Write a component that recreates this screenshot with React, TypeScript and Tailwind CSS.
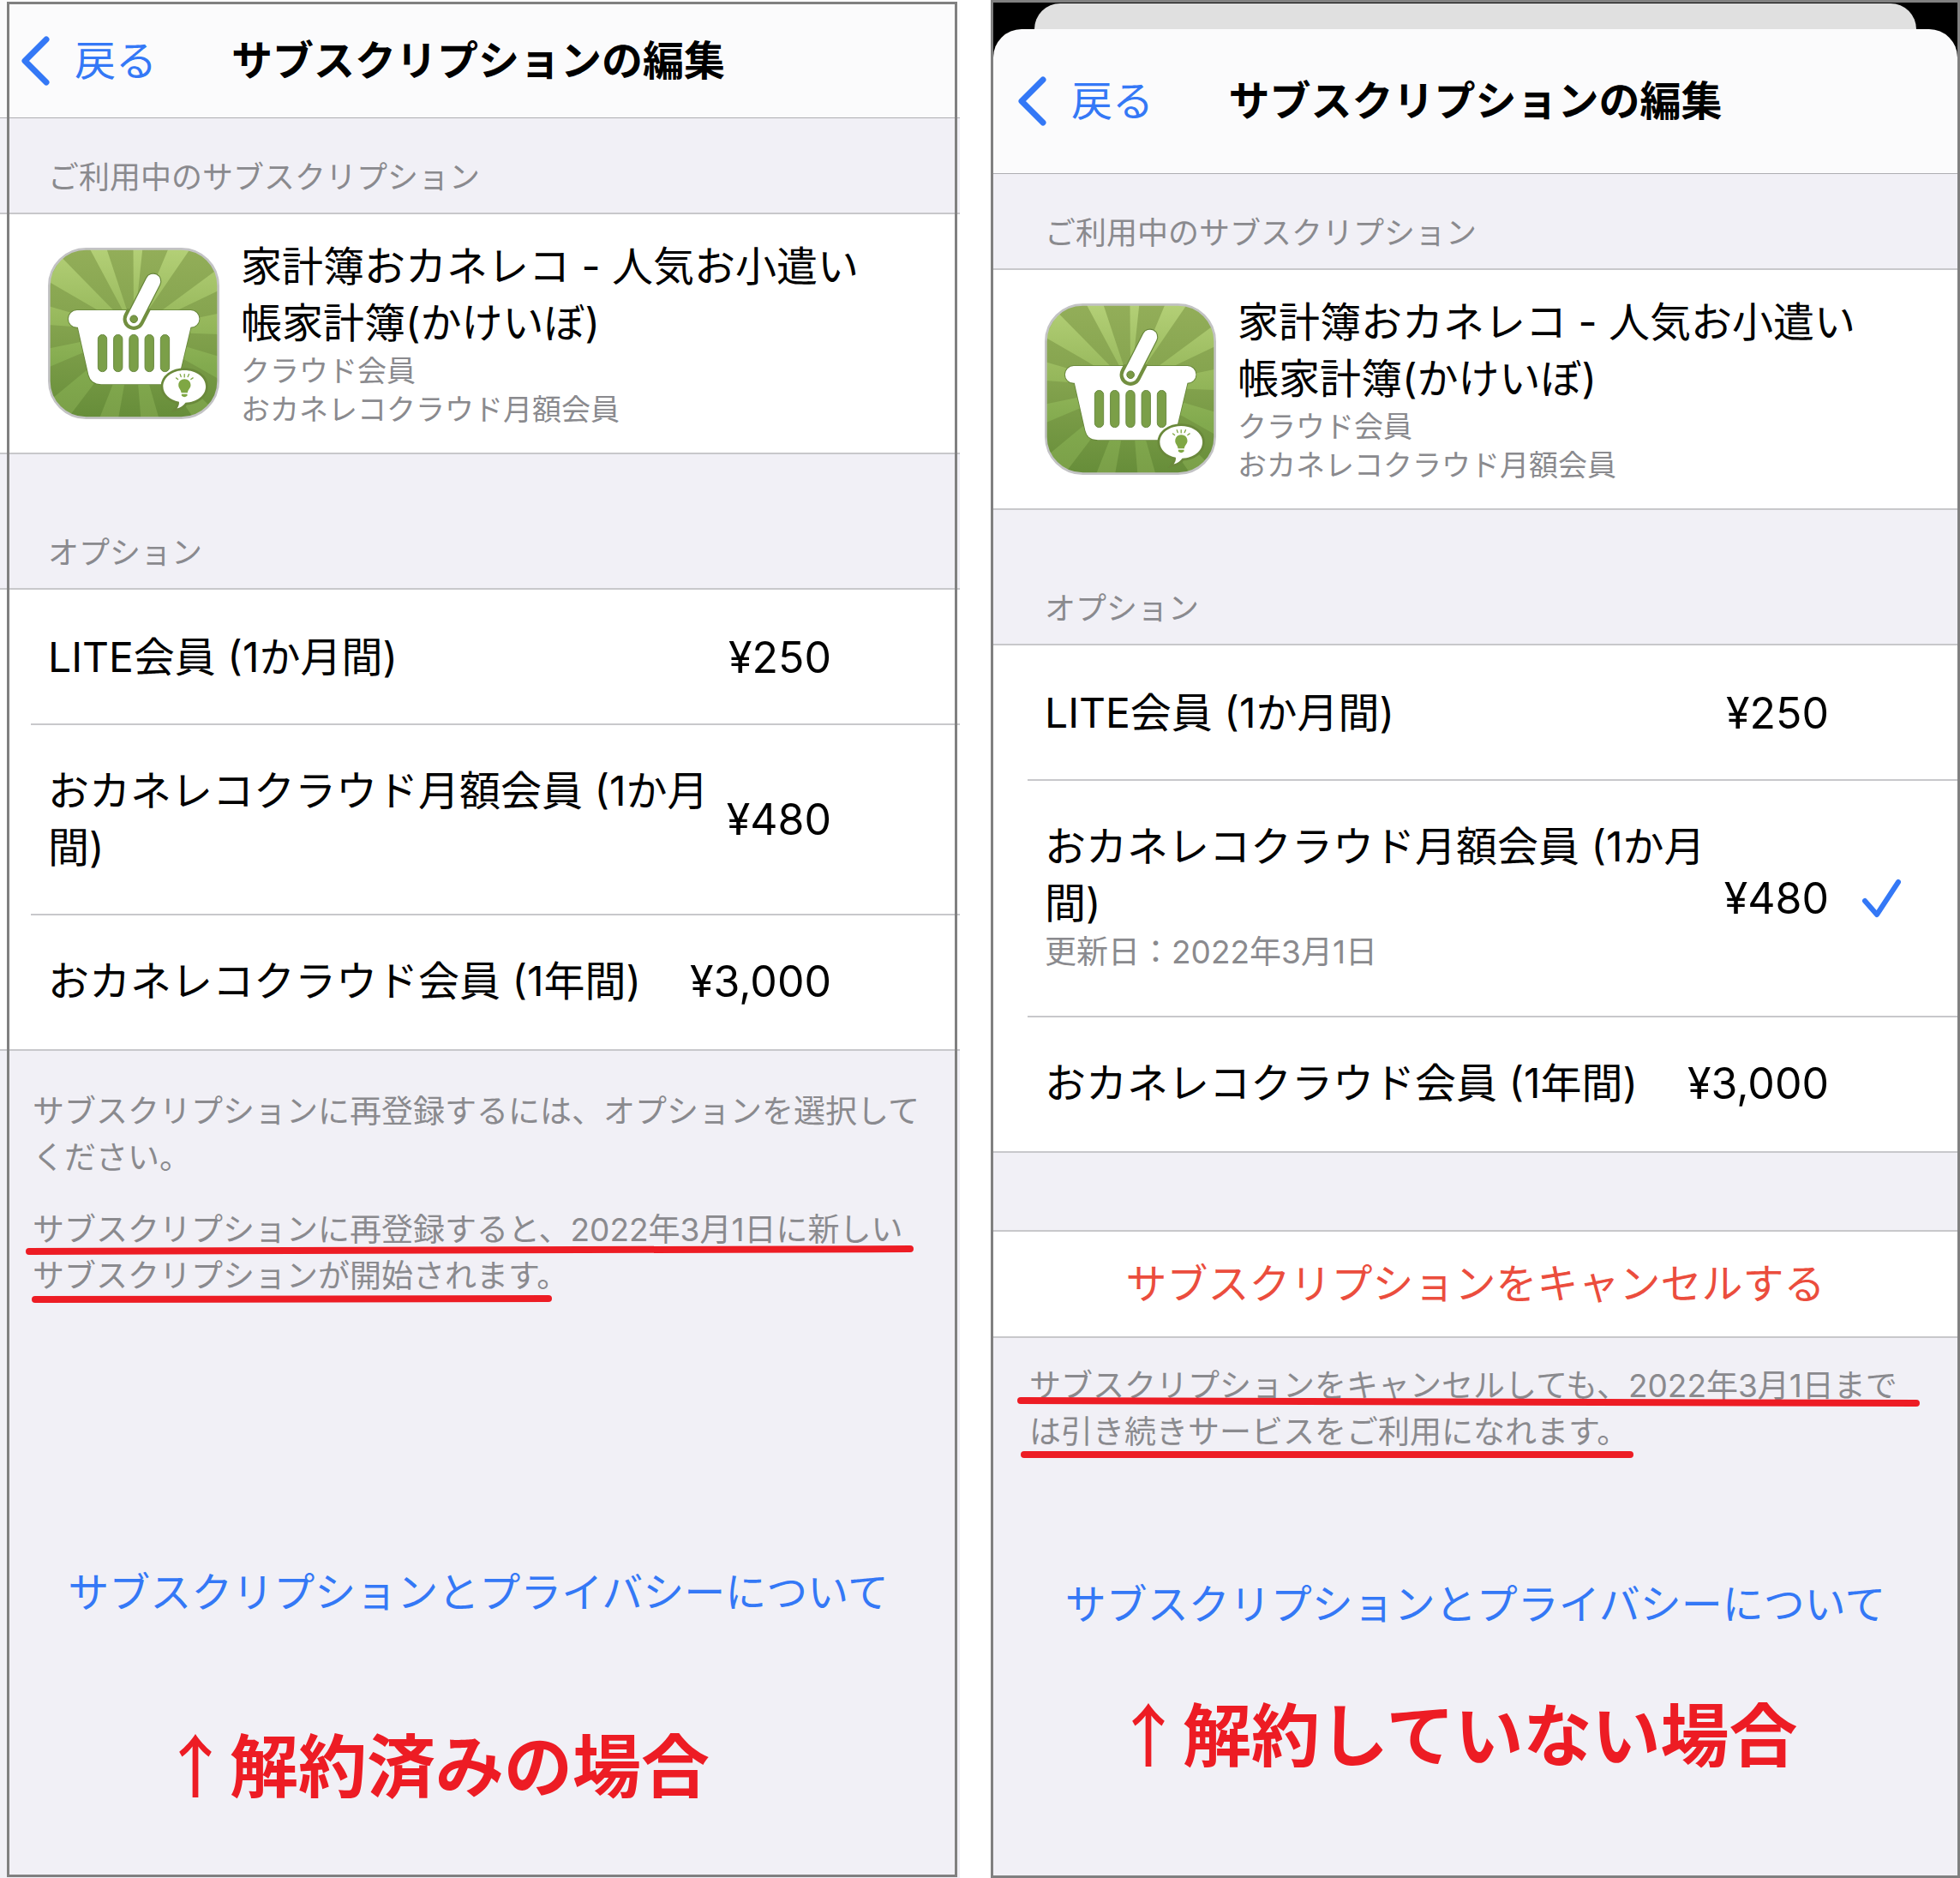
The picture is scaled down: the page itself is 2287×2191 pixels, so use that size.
import type { ReactNode } from "react";

type Option = {
  name: string;
  price: string;
  renewal?: string;
  selected?: boolean;
};

const CANCELED_OPTIONS: Option[] = [
  { name: "LITE会員 (1か月間)", price: "¥250" },
  { name: "おカネレコクラウド月額会員 (1か月間)", price: "¥480" },
  { name: "おカネレコクラウド会員 (1年間)", price: "¥3,000" },
];

const ACTIVE_OPTIONS: Option[] = [
  { name: "LITE会員 (1か月間)", price: "¥250" },
  {
    name: "おカネレコクラウド月額会員 (1か月間)",
    price: "¥480",
    renewal: "更新日：2022年3月1日",
    selected: true,
  },
  { name: "おカネレコクラウド会員 (1年間)", price: "¥3,000" },
];

const LIGHT_RAYS = [
  "190,57 250,57",
  "345,57 378,57",
  "470,57 548,57",
  "648,128 648,206",
  "648,288 648,362",
  "648,440 648,520",
  "560,660 640,640",
  "372,660 436,660",
  "225,660 292,660",
  "45,600 112,660",
  "45,412 45,478",
  "45,262 45,328",
  "45,175 92,90",
];

function BasketIcon({ id }: { id: string }) {
  return (
    <svg viewBox="45 57 603 603" className="size-[200px] shrink-0" aria-hidden="true">
      <defs>
        <linearGradient id={`${id}-base`} x1="0" y1="0" x2="0" y2="1">
          <stop offset="0" stopColor="#93ae59" />
          <stop offset="0.45" stopColor="#84a34e" />
          <stop offset="1" stopColor="#668d39" />
        </linearGradient>
        <linearGradient
          id={`${id}-ray`}
          gradientUnits="userSpaceOnUse"
          x1="0"
          y1="57"
          x2="0"
          y2="660"
        >
          <stop offset="0" stopColor="#b4d077" />
          <stop offset="0.4" stopColor="#98b95d" />
          <stop offset="0.7" stopColor="#82aa4e" />
          <stop offset="1" stopColor="#7a9f48" />
        </linearGradient>
        <clipPath id={`${id}-shape`}>
          <rect x="49" y="61" width="595" height="595" rx="130" />
        </clipPath>
        <clipPath id={`${id}-rim`}>
          <rect x="290" y="272" width="140" height="90" />
        </clipPath>
      </defs>
      <g clipPath={`url(#${id}-shape)`}>
        <rect x="45" y="57" width="603" height="603" fill={`url(#${id}-base)`} />
        {LIGHT_RAYS.map((edge) => (
          <polygon key={edge} points={`347,350 ${edge}`} fill={`url(#${id}-ray)`} />
        ))}
      </g>
      <path
        d="M147 277 H547 A30 30 0 0 1 547 337 L508 500 Q500 537 465 537 H232 Q196 537 188 505 L150 337 H147 A30 30 0 0 1 147 277 Z"
        fill="#fff"
        stroke="#66853a"
        strokeWidth="5"
        paintOrder="stroke"
      />
      <line
        x1="415"
        y1="175"
        x2="347"
        y2="308"
        stroke="#66853a"
        strokeWidth="58"
        strokeLinecap="round"
      />
      <line
        x1="415"
        y1="175"
        x2="347"
        y2="308"
        stroke="#728f40"
        strokeWidth="76"
        strokeLinecap="round"
        clipPath={`url(#${id}-rim)`}
      />
      <line
        x1="415"
        y1="175"
        x2="347"
        y2="308"
        stroke="#fff"
        strokeWidth="51"
        strokeLinecap="round"
      />
      <circle cx="347" cy="308" r="13" fill="#7a9a45" stroke="#5f7e33" strokeWidth="3" />
      {[220, 275, 330, 385, 440].map((x) => (
        <rect
          key={x}
          x={x + 1}
          y="363"
          width="31"
          height="130"
          rx="15"
          fill="#7b9f48"
          stroke="#688840"
          strokeWidth="3"
        />
      ))}
      <path
        d="M525 488 C567 488 600 513 600 545 C600 577 569 601 529 602 C522 612 512 619 499 622 C505 614 507 606 506 599 C473 593 450 571 450 545 C450 513 483 488 525 488 Z"
        fill="#fff"
        stroke="#6a893b"
        strokeWidth="17"
        paintOrder="stroke"
      />
      <path
        d="M525 519 C538 519 547 528 547 540 C547 552 537 556 536 567 H514 C513 556 504 552 504 540 C504 528 513 519 525 519 Z M515 572 H535 V578 Q525 586 515 578 Z"
        fill="#7fa744"
      />
      <path
        d="M525 512 V502 M513 511 L510 502 M537 511 L541 502 M502 520 L496 515 M548 520 L555 515"
        stroke="#7fa744"
        strokeWidth="4"
        strokeLinecap="round"
      />
      <rect
        x="49"
        y="61"
        width="595"
        height="595"
        rx="130"
        fill="none"
        stroke="#c3c3c5"
        strokeWidth="8"
      />
    </svg>
  );
}

function NavBar({ className }: { className: string }) {
  return (
    <header
      className={`grid grid-cols-[1fr_auto_1fr] items-center border-b border-[#aeaeb2] bg-[#fbfbfc] ${className}`}
    >
      <button
        type="button"
        className="ml-[28px] flex items-center gap-[29px] justify-self-start text-[48px] leading-[66px] text-[#3478f6]"
      >
        <svg viewBox="0 0 34 58" className="h-[58px] w-[34px]" fill="none" aria-hidden="true">
          <path
            d="M30 4 L5 29 L30 54"
            stroke="currentColor"
            strokeWidth="7"
            strokeLinecap="round"
            strokeLinejoin="round"
          />
        </svg>
        戻る
      </button>
      <h1 className="text-[48px] leading-[66px] font-bold">サブスクリプションの編集</h1>
    </header>
  );
}

function SectionLabel({ children }: { children: ReactNode }) {
  return (
    <h2 className="px-[60px] pb-[17px] text-[36px] leading-[48px] text-[#8a8a8e]">{children}</h2>
  );
}

function CurrentPlan({ id }: { id: string }) {
  return (
    <section className="pt-[45px]">
      <SectionLabel>ご利用中のサブスクリプション</SectionLabel>
      <div className="flex items-center gap-[25px] border-y-2 border-[#c8c8cb] bg-white py-[28px] pr-[90px] pl-[60px]">
        <BasketIcon id={id} />
        <div className="min-w-0">
          <p className="text-[48px] leading-[66px]">
            家計簿おカネレコ - 人気お小遣い帳家計簿(かけいぼ)
          </p>
          <p className="text-[34px] leading-[45px] text-[#8a8a8e]">クラウド会員</p>
          <p className="text-[34px] leading-[45px] text-[#8a8a8e]">おカネレコクラウド月額会員</p>
        </div>
      </div>
    </section>
  );
}

function OptionList({ options }: { options: Option[] }) {
  return (
    <section className="pt-[91px]">
      <SectionLabel>オプション</SectionLabel>
      <ul className="border-y-2 border-[#c8c8cb] bg-white py-[2px] pl-[40px]">
        {options.map((o) => (
          <li key={o.name} className="border-b-2 border-[#c8c8cb] last:border-b-0">
            <button
              type="button"
              aria-pressed={!!o.selected}
              className="flex w-full items-center gap-2 py-11 pl-[20px] text-left"
            >
              <span className="min-w-0 flex-1">
                <span className="block text-[48px] leading-[66px]">{o.name}</span>
                {o.renewal && (
                  <span className="mb-[6px] block text-[37px] leading-[48px] text-[#8a8a8e]">
                    {o.renewal}
                  </span>
                )}
              </span>
              <span className="text-[50px] leading-[66px]">{o.price}</span>
              <span className="w-[142px] pl-[30px]">
                {o.selected && (
                  <svg
                    viewBox="0 0 46 46"
                    className="size-[46px]"
                    fill="none"
                    aria-hidden="true"
                  >
                    <path
                      d="M4 26 L18 42 L43 4"
                      stroke="#3478f6"
                      strokeWidth="6"
                      strokeLinecap="round"
                      strokeLinejoin="round"
                    />
                  </svg>
                )}
              </span>
            </button>
          </li>
        ))}
      </ul>
    </section>
  );
}

// Hand-drawn marker lines laid over the footnotes
function Marker({ className, slope }: { className: string; slope: number }) {
  const y1 = slope < 0 ? 5 - slope : 5;
  const y2 = y1 + slope;
  return (
    <svg
      className={`pointer-events-none absolute h-[14px] overflow-visible ${className}`}
      aria-hidden="true"
    >
      <line
        x1="0"
        y1={y1}
        x2="100%"
        y2={y2}
        stroke="#ed1c24"
        strokeWidth="8"
        strokeLinecap="round"
      />
    </svg>
  );
}

function PrivacyLink() {
  return (
    <div className="text-center">
      <a href="#privacy" className="text-[48px] leading-[66px] text-[#3478f6]">
        サブスクリプションとプライバシーについて
      </a>
    </div>
  );
}

function Caption({ children }: { children: ReactNode }) {
  return (
    <p className="text-[80px] leading-[100px] font-bold text-[#ed1c24]">
      <span className="font-['Noto_Sans_CJK_JP'] font-medium">↑</span>
      {children}
    </p>
  );
}

export default function App() {
  return (
    <main className="flex min-h-screen gap-9 bg-white font-['Inter','Noto_Sans_CJK_JP',sans-serif] text-black">
      <section className="relative min-w-0 flex-[1120] overflow-hidden bg-[#f1f0f6]">
        <div className="-ml-1">
          <NavBar className="h-[138px] pt-1" />
          <CurrentPlan id="canceled" />
          <OptionList options={CANCELED_OPTIONS} />
          <div className="pt-[44px] pr-[40px] pl-[42px] text-[37px] leading-[54px] text-[#8a8a8e]">
            <p>サブスクリプションに再登録するには、オプションを選択してください。</p>
            <div className="relative mt-[30px]">
              <p>
                サブスクリプションに再登録すると、2022年3月1日に新しいサブスクリプションが開始されます。
              </p>
              <Marker className="top-[44px] -left-1 w-[1028px]" slope={-3} />
              <Marker className="top-[102px] left-[3px] w-[599px]" slope={-1} />
            </div>
          </div>
          <div className="pt-[309px]">
            <PrivacyLink />
          </div>
          <div className="pt-[114px] pl-[192px]">
            <Caption>解約済みの場合</Caption>
          </div>
        </div>
        <div className="pointer-events-none absolute top-[2px] right-[3px] bottom-px left-2 border-[3px] border-[#808080]" />
      </section>

      <section className="min-w-0 flex-[1125] overflow-hidden border-[3px] border-[#808080] bg-[#f1f0f6]">
        {/* Stacked sheet behind the modal */}
        <div className="relative bg-black pt-[31px]">
          <div className="absolute inset-x-12 top-px h-[60px] rounded-t-[30px] bg-[#e0e0e0]" />
          <div className="relative overflow-hidden rounded-t-[33px]">
            <NavBar className="h-[169px]" />
          </div>
        </div>
        <CurrentPlan id="active" />
        <OptionList options={ACTIVE_OPTIONS} />
        <button
          type="button"
          className="mt-[90px] block w-full border-y-2 border-[#c8c8cb] bg-white py-[28px] text-center text-[48px] leading-[66px] text-[#eb4d3d]"
        >
          サブスクリプションをキャンセルする
        </button>
        <div className="pt-[29px] pr-[40px] pl-[42px] text-[37px] leading-[54px] text-[#8a8a8e]">
          <div className="relative">
            <p>
              サブスクリプションをキャンセルしても、2022年3月1日までは引き続きサービスをご利用になれます。
            </p>
            <Marker className="top-[39px] -left-[10px] w-[1045px]" slope={3} />
            <Marker className="top-[102px] -left-[6px] w-[707px]" slope={0} />
          </div>
        </div>
        <div className="pt-[141px]">
          <PrivacyLink />
        </div>
        <div className="pt-[64px] pl-[141px]">
          <Caption>解約していない場合</Caption>
        </div>
      </section>
    </main>
  );
}
